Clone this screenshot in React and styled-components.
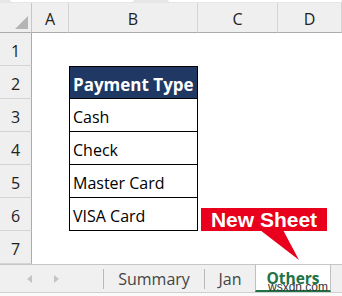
import styled, { createGlobalStyle } from 'styled-components';

const GlobalStyle = createGlobalStyle`
    body{
        margin: 0;
        background: #fff;
        font-family: "Open Sans", "Liberation Sans", sans-serif;
    }
`;

const COLS = [32, 37, 129, 80, 64];
const payments = ['Cash', 'Check', 'Master Card', 'VISA Card'];

export default function App() {
    return (
        <>
            <GlobalStyle />
            <Page>
                <TopStrip>
                    <FormulaEdge $w={124} />
                    <FormulaEdge $w={175} />
                </TopStrip>
                <Sheet>
                    <Corner><span /></Corner>
                    {['A', 'B', 'C', 'D'].map((c) => (
                        <ColHead key={c}>{c}</ColHead>
                    ))}
                    {[1, 2, 3, 4, 5, 6, 7].map((r) => (
                        <Row key={r} r={r} />
                    ))}
                </Sheet>
                <TabBar>
                    <Arrows>
                        <Arrow $dir="left" />
                        <Arrow $dir="right" />
                    </Arrows>
                    <Tab $w={101}>Summary</Tab>
                    <Tab $w={51}>Jan</Tab>
                    <ActiveTab>Others</ActiveTab>
                </TabBar>
                <BottomStrip />
                <Callout>
                    New Sheet
                    <Pointer viewBox="0 0 60 32" width="60" height="32">
                        <polygon points="0,0 23,0 39,30" fill="#e8001c" />
                    </Pointer>
                </Callout>
                <Watermark>wsxdn.com</Watermark>
            </Page>
        </>
    );
}

const Row = ({ r }) => {
    const idx = r - 3;
    return (
        <>
            <RowHead>{r}</RowHead>
            <Cell />
            {r === 2 ? (
                <TableHead>Payment Type</TableHead>
            ) : idx >= 0 && idx < payments.length ? (
                <TableCell>{payments[idx]}</TableCell>
            ) : (
                <Cell />
            )}
            <Cell />
            <Cell />
        </>
    );
};

const Page = styled.div`
    position: relative;
    width: 342px;
    height: 296px;
    overflow: hidden;
    background: #fff;
`;

const TopStrip = styled.div`
    height: 3px;
    background: #e6e6e6;
    display: flex;
    gap: 34px;
    padding-left: 10px;
`;

const FormulaEdge = styled.div`
    width: ${(p) => p.$w}px;
    height: 2px;
    background: #fff;
    border-radius: 0 0 3px 3px;
`;

const Sheet = styled.div`
    display: grid;
    grid-template-columns: ${COLS.map((c) => c + 'px').join(' ')};
    grid-template-rows: 30px repeat(7, 33px);
`;

const Corner = styled.div`
    background: #efefef;
    border-right: 1px solid #c6c6c6;
    border-bottom: 1px solid #ababab;
    position: relative;
    span{
        position: absolute;
        right: 3px;
        bottom: 3px;
        width: 0;
        height: 0;
        border-left: 13px solid transparent;
        border-bottom: 13px solid #b5b5b5;
    }
`;

const ColHead = styled.div`
    background: #efefef;
    border-right: 1px solid #d4d4d4;
    border-bottom: 1px solid #ababab;
    display: flex;
    align-items: center;
    justify-content: center;
    font-size: 16px;
    color: #222;
    padding-top: 3px;
`;

const RowHead = styled.div`
    background: #efefef;
    border-right: 1px solid #ababab;
    border-bottom: 1px solid #d4d4d4;
    display: flex;
    align-items: center;
    justify-content: center;
    font-size: 16px;
    color: #222;
    padding-top: 4px;
`;

const Cell = styled.div`
    background: #fff;
`;

const TableHead = styled.div`
    background: #1f3864;
    border: 1px solid #000;
    color: #fff;
    font-weight: 700;
    font-size: 17px;
    display: flex;
    align-items: center;
    padding: 4px 0 0 3px;
    white-space: nowrap;
`;

const TableCell = styled.div`
    background: #fff;
    border: 1px solid #000;
    border-top: none;
    color: #000;
    font-size: 16px;
    display: flex;
    align-items: center;
    padding: 3px 0 0 3px;
    white-space: nowrap;
`;

const TabBar = styled.div`
    height: 29px;
    box-sizing: border-box;
    background: #f0f0f0;
    border-top: 1px solid #c6c6c6;
    border-bottom: 1px solid #d0d0d0;
    display: flex;
    align-items: stretch;
`;

const Arrows = styled.div`
    width: 103px;
    display: flex;
    align-items: center;
    padding-left: 27px;
    gap: 22px;
    box-sizing: border-box;
`;

const Arrow = styled.span`
    width: 0;
    height: 0;
    border-top: 4px solid transparent;
    border-bottom: 4px solid transparent;
    ${(p) => p.$dir === 'left'
        ? 'border-right: 5px solid #c4c4c4;'
        : 'border-left: 5px solid #c4c4c4;'}
`;

const Tab = styled.div`
    width: ${(p) => p.$w}px;
    border-left: 1px solid #b8b8b8;
    margin: 4px 0 3px;
    display: flex;
    align-items: center;
    justify-content: center;
    font-size: 16px;
    color: #444;
    box-sizing: border-box;
`;

const ActiveTab = styled.div`
    width: 76px;
    background: #fff;
    border-left: 1px solid #c0c0c0;
    border-right: 1px solid #c0c0c0;
    border-bottom: 2px solid #217346;
    display: flex;
    align-items: center;
    justify-content: center;
    font-size: 15.5px;
    font-weight: 700;
    color: #217346;
    box-sizing: border-box;
    padding-top: 1px;
`;

const BottomStrip = styled.div`
    height: 3px;
    background: #fafafa;
`;

const Callout = styled.div`
    position: absolute;
    left: 201px;
    top: 208px;
    width: 126px;
    height: 23px;
    background: #e8001c;
    color: #fff;
    font-family: "Liberation Sans", Arial, sans-serif;
    font-weight: 700;
    font-size: 21px;
    display: flex;
    align-items: center;
    justify-content: center;
    padding-top: 1px;
    box-sizing: border-box;
`;

const Pointer = styled.svg`
    position: absolute;
    left: 59px;
    top: 22px;
`;

const Watermark = styled.div`
    position: absolute;
    left: 268px;
    top: 280px;
    font-family: "Liberation Sans", Arial, sans-serif;
    font-size: 12px;
    color: #333;
`;
